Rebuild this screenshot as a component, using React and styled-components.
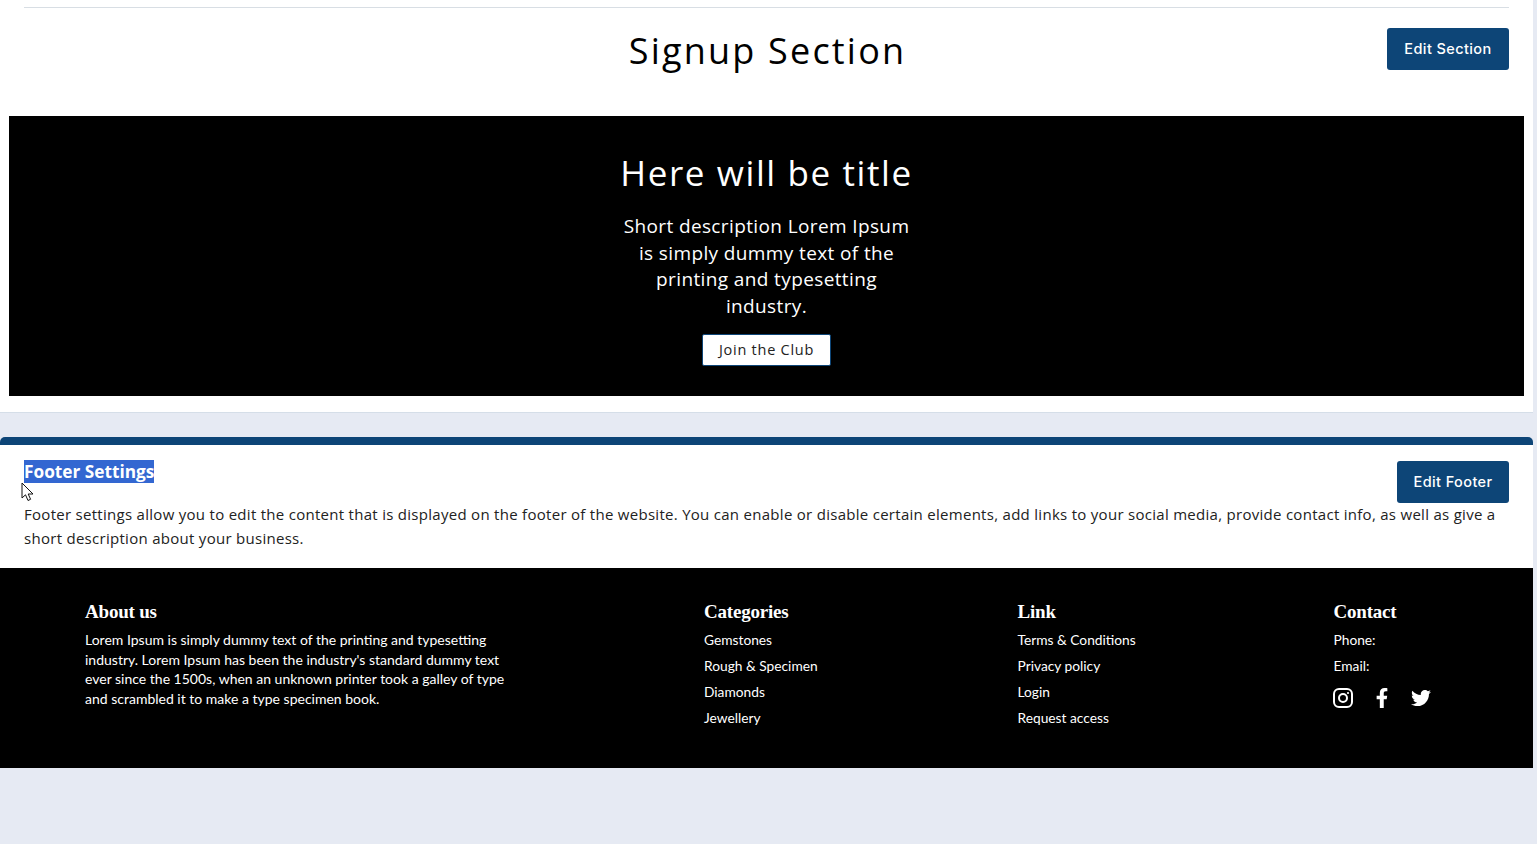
import React from "react";
import styled, { createGlobalStyle } from "styled-components";
import { FaFacebookF, FaTwitter } from "react-icons/fa";

const Global = createGlobalStyle`
  html, body { margin: 0; padding: 0; background: #e6eaf3; height: 844px; overflow: hidden; }
  body { font-family: "Open Sans", "Liberation Sans", sans-serif; }
`;
const Page = styled.div`width: 1533px; display: flex; flex-direction: column;`;
const SectionCard = styled.section`
  background: #fff; border-bottom: 1px solid #d5dee8; height: 413px; box-sizing: border-box;
  padding-top: 7px; display: flex; flex-direction: column;
`;
const Rule = styled.hr`margin: 0 24px; border: 0; border-top: 1px solid #d8dee4; width: 1485px;`;
const SectionHead = styled.div`
  height: 108px; box-sizing: border-box; padding: 20px 24px 0; display: flex; justify-content: flex-end; position: relative;
`;
const SectionTitle = styled.h2`
  position: absolute; left: 2px; right: 0; top: 20px; margin: 0; text-align: center;
  font: 400 36px/46px "Open Sans", sans-serif; letter-spacing: 2.2px; color: #000;
`;
const EditButton = styled.button`
  height: 42px; width: ${p => p.$w}px; margin-top: ${p => p.$top || 0}px; border: 0; border-radius: 3px; background: #0d4577; color: #fff;
  font: 450 14.5px/20px Inter, sans-serif; letter-spacing: .4px; padding: 0;
`;
const Banner = styled.div`
  margin: 0 9px; width: 1515px; height: 280px; background: #000; color: #fff; box-sizing: border-box;
  padding-top: 34px; display: flex; flex-direction: column; align-items: center;
`;
const BannerTitle = styled.h3`margin: 0; font: 400 35px/46px "Open Sans", sans-serif; letter-spacing: 1.6px;`;
const BannerText = styled.p`
  margin: 17px 0 0; width: 295px; text-align: center; font: 400 19px/26.6px "Open Sans", sans-serif; letter-spacing: .38px;
`;
const JoinButton = styled.button`
  margin-top: 15px; width: 129px; height: 32px; background: #fff; border: 1px solid #0d4577; border-radius: 2px;
  color: #222; font: 400 14.5px/20px "Open Sans", sans-serif; letter-spacing: .75px; padding: 0;
`;
const FooterCard = styled.section`
  margin-top: 24px; background: #fff; border-top: 8px solid #0d4577; border-radius: 5px 5px 0 0;
  height: 131px; box-sizing: border-box; position: relative; padding: 15px 24px 0;
`;
const FooterHead = styled.div`display: flex; justify-content: space-between; align-items: flex-start; height: 42px;`;
const Selected = styled.span`
  display: inline-block; background: #3367d1; color: #fff; font: 700 17.25px/23px "Open Sans", sans-serif;
`;
const FooterBlurb = styled.p`
  margin: 0; font: 400 15px/24px "Open Sans", sans-serif; color: #222; letter-spacing: .285px; width: 1485px;
`;
const Cursor = styled.svg`position: absolute; left: 21px; top: 37px;`;
const Footer = styled.footer`
  height: 200px; background: #000; color: #fff; box-sizing: border-box; padding: 32px 0 0 85px;
  display: grid; grid-template-columns: 619px 313.5px 316px 1fr;
`;
const ColTitle = styled.h4`margin: 0 0 3px; font: 700 19px/24px "Liberation Serif", serif; letter-spacing: -.2px;`;
const AboutText = styled.p`margin: 6px 0 0; width: 425px; font: 400 14px/19.6px Lato, sans-serif;`;
const LinkItem = styled.div`font: 400 13.75px/26px Lato, sans-serif;`;
const Social = styled.div`display: flex; align-items: center; gap: 19px; margin: 9px 0 0 -.5px; font-size: 20px;`;

const InstagramIcon = () => (
  <svg width="20" height="20" viewBox="0 0 20 20" fill="none" stroke="#fff" strokeWidth="2">
    <rect x="1" y="1" width="18" height="18" rx="5" />
    <circle cx="10" cy="10" r="4" />
    <circle cx="15" cy="5" r="1.1" fill="#fff" stroke="none" />
  </svg>
);

export default function App() {
  return (
    <Page>
      <Global />
      <SectionCard>
        <Rule />
        <SectionHead>
          <SectionTitle>Signup Section</SectionTitle>
          <EditButton $w={122}>Edit Section</EditButton>
        </SectionHead>
        <Banner>
          <BannerTitle>Here will be title</BannerTitle>
          <BannerText>Short description Lorem Ipsum is simply dummy text of the printing and typesetting industry.</BannerText>
          <JoinButton>Join the Club</JoinButton>
        </Banner>
      </SectionCard>
      <FooterCard>
        <FooterHead>
          <Selected>Footer Settings</Selected>
          <EditButton $w={112} $top={1}>Edit Footer</EditButton>
        </FooterHead>
        <FooterBlurb>
          Footer settings allow you to edit the content that is displayed on the footer of the website. You can enable or disable certain elements, add links to your social media, provide contact info, as well as give a short description about your business.
        </FooterBlurb>
        <Cursor width="14" height="20" viewBox="0 0 14 20">
          <path d="M1 1v15l3.5-3.2L7 18.5l2.6-1.2L7.2 12H12z" fill="#fff" stroke="#111" strokeWidth="1" />
        </Cursor>
      </FooterCard>
      <Footer>
        <div>
          <ColTitle>About us</ColTitle>
          <AboutText>Lorem Ipsum is simply dummy text of the printing and typesetting industry. Lorem Ipsum has been the industry's standard dummy text ever since the 1500s, when an unknown printer took a galley of type and scrambled it to make a type specimen book.</AboutText>
        </div>
        <div>
          <ColTitle>Categories</ColTitle>
          <LinkItem>Gemstones</LinkItem>
          <LinkItem>Rough &amp; Specimen</LinkItem>
          <LinkItem>Diamonds</LinkItem>
          <LinkItem>Jewellery</LinkItem>
        </div>
        <div>
          <ColTitle>Link</ColTitle>
          <LinkItem>Terms &amp; Conditions</LinkItem>
          <LinkItem>Privacy policy</LinkItem>
          <LinkItem>Login</LinkItem>
          <LinkItem>Request access</LinkItem>
        </div>
        <div>
          <ColTitle>Contact</ColTitle>
          <LinkItem>Phone:</LinkItem>
          <LinkItem>Email:</LinkItem>
          <Social>
            <InstagramIcon />
            <FaFacebookF />
            <FaTwitter />
          </Social>
        </div>
      </Footer>
    </Page>
  );
}
